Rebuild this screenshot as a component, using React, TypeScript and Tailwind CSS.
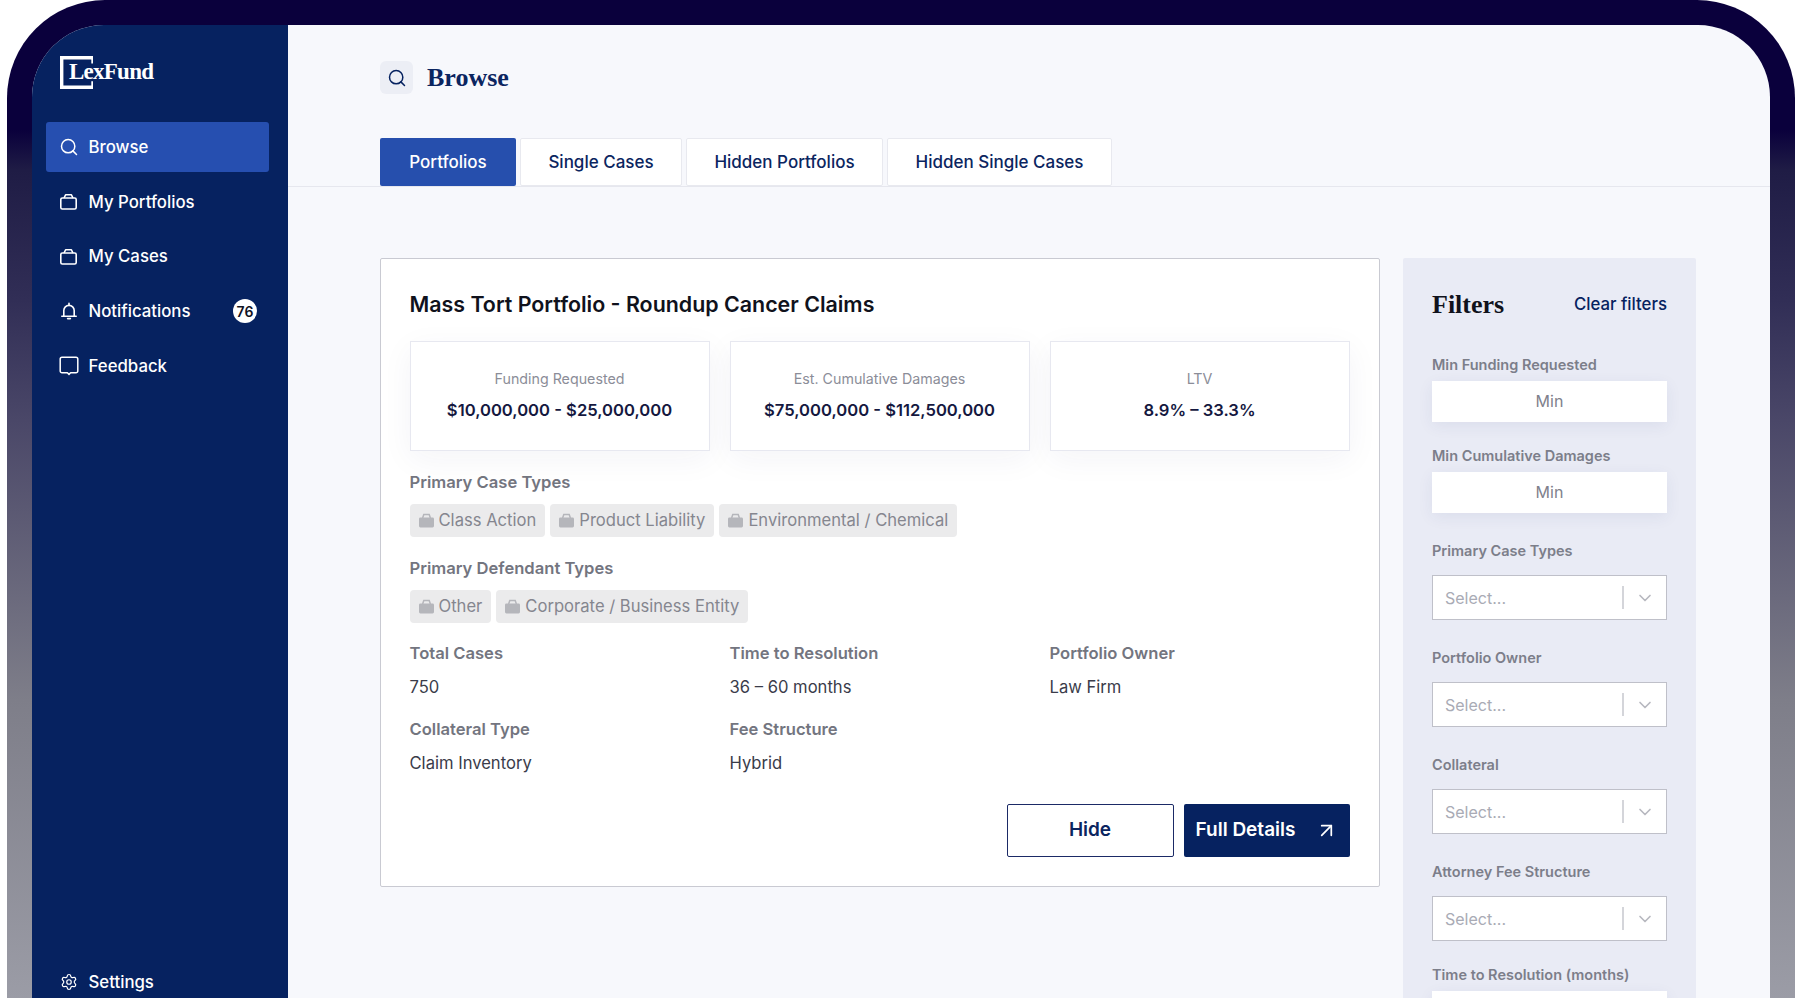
import { ArrowUpRight, ChevronDown, Search, Settings } from 'lucide-react';

const Bag = () => (
    <svg width="18" height="18" viewBox="0 0 18 18" fill="none" stroke="currentColor" strokeWidth="1.6" strokeLinejoin="round">
        <rect x="0.8" y="5" width="15.4" height="11" rx="1.5" />
        <path d="M4 5 5.6 1.8h5.8L13 5" />
    </svg>
);

const Bell = () => (
    <svg width="18" height="18" viewBox="0 0 18 18" fill="none" stroke="currentColor" strokeWidth="1.6" strokeLinecap="round" strokeLinejoin="round">
        <path d="M1.8 14.2h14.4" />
        <path d="M3.8 14V8.6a5.2 5.2 0 0 1 10.4 0V14" />
        <path d="M9 1.2v2M7.6 16.6h2.8" />
    </svg>
);

const Feedback = () => (
    <svg width="20" height="20" viewBox="0 0 20 20" fill="none" stroke="currentColor" strokeWidth="1.5" strokeLinejoin="round" className="shrink-0">
        <path d="M3 1.2h14A1.8 1.8 0 0 1 18.8 3v12a1.8 1.8 0 0 1-1.8 1.8h-5.4L10 18.4l-1.6-1.6H3A1.8 1.8 0 0 1 1.2 15V3A1.8 1.8 0 0 1 3 1.2z" />
    </svg>
);

const ChipIcon = () => (
    <svg width="15" height="15" viewBox="0 0 15 15" className="shrink-0">
        <path d="M3.6 5 4.8 1.4h5.4L11.4 5" fill="none" stroke="#b5b6bb" strokeWidth="1.5" />
        <rect x="0" y="4.5" width="15" height="10" rx="1.4" fill="#b5b6bb" />
    </svg>
);

const NAV = [
    { label: 'Browse', icon: <Search size={20} strokeWidth={1.8} className="shrink-0" />, active: true },
    { label: 'My Portfolios', icon: <Bag /> },
    { label: 'My Cases', icon: <Bag /> },
    { label: 'Notifications', icon: <Bell />, badge: '76' },
    { label: 'Feedback', icon: <Feedback /> },
];

const TABS = [
    { label: 'Portfolios', width: 'w-[136px]', active: true },
    { label: 'Single Cases', width: 'w-[162px]' },
    { label: 'Hidden Portfolios', width: 'w-[197px]' },
    { label: 'Hidden Single Cases', width: 'w-[225px]' },
];

const STATS = [
    { label: 'Funding Requested', value: '$10,000,000 - $25,000,000' },
    { label: 'Est. Cumulative Damages', value: '$75,000,000 - $112,500,000' },
    { label: 'LTV', value: '8.9% – 33.3%' },
];

const Chip = ({ text }: { text: string }) => (
    <span className="flex h-[33px] items-center gap-[5px] rounded bg-[#ebebec] px-[9px] text-[16.6px] text-[#85868f]">
        <ChipIcon />
        {text}
    </span>
);

const Detail = ({ label, value }: { label: string; value: string }) => (
    <div className="h-[76px]">
        <div className="text-[16.6px] leading-[20px] font-semibold text-[#73757f]">{label}</div>
        <div className="mt-[14px] text-[16.6px] leading-[20px] text-[#3a3c4a]">{value}</div>
    </div>
);

const FilterInput = ({ label, className }: { label: string; className: string }) => (
    <div className={className}>
        <div className="text-[14.5px] leading-[18px] font-semibold text-[#7c7e8a]">{label}</div>
        <div className="mt-[7px] flex h-[41px] items-center justify-center bg-white pb-[1px] text-[16px] text-[#7f818c] shadow-[0_4px_16px_rgba(40,50,110,0.07)]">
            Min
        </div>
    </div>
);

const FilterSelect = ({ label, className }: { label: string; className: string }) => (
    <div className={className}>
        <div className="text-[14.5px] leading-[18px] font-semibold text-[#7c7e8a]">{label}</div>
        <div className="mt-[15px] flex h-[45px] items-center border-[1.5px] border-[#bfc0c9] bg-white pl-[12px] text-[16px] text-[#a9abb5]">
            <span className="flex-1">Select...</span>
            <span className="h-[23px] w-[2px] bg-[#d4d5da]" />
            <ChevronDown size={20} className="mx-[11px] text-[#b7b8bf]" strokeWidth={2} />
        </div>
    </div>
);

export default function App() {
    return (
        <div className="h-[998px] w-[1800px] overflow-hidden bg-white pl-[7px] font-['Inter',sans-serif]">
            <div className="h-[1100px] w-[1788px] rounded-t-[98px] bg-[linear-gradient(180deg,#0a003c_0px,#0a003c_130px,#1f1c45_170px,#312e56_300px,#4a4768_420px,#7e7e89_700px,#9b9ca6_998px)] px-[25px] pt-[25px]">
                <div className="flex h-[1075px] overflow-hidden rounded-t-[72px] bg-[#f7f8fc]">
                    {/* Sidebar */}
                    <aside className="flex w-[256px] shrink-0 flex-col bg-[#062260] pr-[19px] pb-[93px] pl-[14px] text-white">
                        <div className="relative mt-[31px] ml-[14px] h-[33px] w-[33px]">
                            <svg width="33" height="33" viewBox="0 0 33 33" fill="none" stroke="white" strokeWidth="3.4">
                                <path d="M33 7.5V1.7H1.7v29.6H33v-6" />
                            </svg>
                            <span className="absolute top-[1px] left-[9px] font-['Liberation_Serif',serif] text-[23px] leading-[30px] font-bold tracking-[-0.75px] whitespace-nowrap">
                                LexFund
                            </span>
                        </div>
                        <nav className="mt-[33px] flex flex-col gap-[4.75px]">
                            {NAV.map((item) => (
                                <div
                                    key={item.label}
                                    className={`flex h-[50px] items-center gap-[10.5px] rounded-[3px] px-[14px] text-[16.8px] font-medium ${item.active ? 'bg-[#264fb0]' : ''}`}
                                >
                                    <span className="flex w-[18px] justify-center">{item.icon}</span>
                                    <span className="flex-1 pt-[1px]">{item.label}</span>
                                    {item.badge && (
                                        <span className="-mr-[2px] flex h-[24px] w-[24px] items-center justify-center rounded-full bg-white text-[14px] font-semibold text-[#10131f]">
                                            {item.badge}
                                        </span>
                                    )}
                                </div>
                            ))}
                        </nav>
                        <div className="mt-auto flex h-[50px] items-center gap-[10.5px] px-[14px] text-[16.8px] font-medium">
                            <Settings size={18} strokeWidth={1.6} />
                            <span className="pt-[1px]">Settings</span>
                        </div>
                    </aside>

                    {/* Main */}
                    <main className="min-w-0 flex-1 pt-[36px]">
                        <div className="flex h-[33px] items-center gap-[14px] pl-[92px]">
                            <span className="flex h-[33px] w-[33px] items-center justify-center rounded-md bg-[#eceef5] text-[#062260]">
                                <Search size={20} strokeWidth={1.8} />
                            </span>
                            <h1 className="font-['Liberation_Serif',serif] text-[26px] leading-[33px] font-bold text-[#0b2560]">Browse</h1>
                        </div>

                        <div className="mt-[44px] flex h-[49px] gap-[4px] border-b border-[#e6e7ee] pl-[92px]">
                            {TABS.map((tab) => (
                                <div
                                    key={tab.label}
                                    className={`flex h-[48px] items-center justify-center rounded-[2px] pt-[1px] text-[17px] font-medium ${tab.width} ${tab.active ? 'bg-[#264fad] text-white' : 'border border-[#e8e9ef] bg-white text-[#0b2560]'}`}
                                >
                                    {tab.label}
                                </div>
                            ))}
                        </div>

                        <div className="mt-[71px] flex items-start gap-[23px] pl-[92px]">
                            {/* Portfolio card */}
                            <section className="h-[629px] w-[1000px] shrink-0 rounded-[2px] border-[1.5px] border-[#c9cad2] bg-white pt-[30px] pr-[29.5px] pl-[28.5px]">
                                <h2 className="text-[21.4px] leading-[30px] font-semibold text-[#10121c]">Mass Tort Portfolio - Roundup Cancer Claims</h2>
                                <div className="mt-[22px] grid grid-cols-3 gap-[20px]">
                                    {STATS.map((stat) => (
                                        <div
                                            key={stat.label}
                                            className="flex h-[110px] flex-col items-center justify-center border border-[#e7e8f0] bg-white pb-[2px] shadow-[0_8px_30px_rgba(30,40,90,0.05)]"
                                        >
                                            <div className="text-[14.25px] leading-[18px] text-[#8b8d98]">{stat.label}</div>
                                            <div className="mt-[11px] text-[16.6px] leading-[22px] font-semibold text-[#15183f]">{stat.value}</div>
                                        </div>
                                    ))}
                                </div>

                                <div className="mt-[21px] text-[16.6px] leading-[20px] font-semibold text-[#73757f]">Primary Case Types</div>
                                <div className="mt-[12px] flex gap-[5px]">
                                    <Chip text="Class Action" />
                                    <Chip text="Product Liability" />
                                    <Chip text="Environmental / Chemical" />
                                </div>
                                <div className="mt-[21px] text-[16.6px] leading-[20px] font-semibold text-[#73757f]">Primary Defendant Types</div>
                                <div className="mt-[12px] flex gap-[5px]">
                                    <Chip text="Other" />
                                    <Chip text="Corporate / Business Entity" />
                                </div>

                                <div className="mt-[20px] grid grid-cols-3 gap-x-[20px]">
                                    <Detail label="Total Cases" value="750" />
                                    <Detail label="Time to Resolution" value="36 – 60 months" />
                                    <Detail label="Portfolio Owner" value="Law Firm" />
                                    <Detail label="Collateral Type" value="Claim Inventory" />
                                    <Detail label="Fee Structure" value="Hybrid" />
                                </div>

                                <div className="mt-[8.5px] flex justify-end gap-[10px]">
                                    <button className="h-[53px] w-[167px] rounded-[2px] border-[1.5px] border-[#1b2a66] pt-[1px] text-[19px] font-semibold text-[#0b2560]">
                                        Hide
                                    </button>
                                    <button className="flex h-[53px] w-[166px] items-center justify-between rounded-[2px] bg-[#062260] pr-[12px] pl-[12px] text-[19px] font-semibold text-white">
                                        Full Details
                                        <ArrowUpRight size={23} strokeWidth={1.8} />
                                    </button>
                                </div>
                            </section>

                            {/* Filters */}
                            <aside className="h-[800px] w-[293px] shrink-0 rounded-[2px] bg-[#e9ebf5] px-[29px] pt-[31px]">
                                <div className="flex items-center justify-between">
                                    <h2 className="font-['Liberation_Serif',serif] text-[26px] leading-[32px] font-bold text-[#10121c]">Filters</h2>
                                    <span className="text-[16.8px] font-medium text-[#062260]">Clear filters</span>
                                </div>
                                <div className="flex flex-col">
                                    <FilterInput label="Min Funding Requested" className="mt-[35px]" />
                                    <FilterInput label="Min Cumulative Damages" className="mt-[25px]" />
                                    <FilterSelect label="Primary Case Types" className="mt-[29px]" />
                                    <FilterSelect label="Portfolio Owner" className="mt-[29px]" />
                                    <FilterSelect label="Collateral" className="mt-[29px]" />
                                    <FilterSelect label="Attorney Fee Structure" className="mt-[29px]" />
                                    <FilterInput label="Time to Resolution (months)" className="mt-[25px]" />
                                </div>
                            </aside>
                        </div>
                    </main>
                </div>
            </div>
        </div>
    );
}
